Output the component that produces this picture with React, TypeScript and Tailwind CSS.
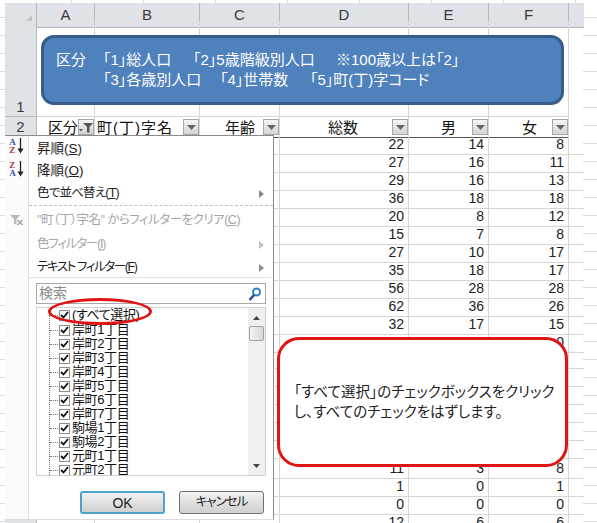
import React from 'react';

const rows: (number[] | null)[] = [
  [22, 14, 8], [27, 16, 11], [29, 16, 13], [36, 18, 18], [20, 8, 12], [15, 7, 8],
  [27, 10, 17], [35, 18, 17], [56, 28, 28], [62, 36, 26], [32, 17, 15], [0, 0, 0],
  null, null, null, null, null, null,
  [11, 3, 8], [1, 0, 1], [0, 0, 0], [12, 6, 6],
];

const towns = [
  '岸町1丁目', '岸町2丁目', '岸町3丁目', '岸町4丁目', '岸町5丁目', '岸町6丁目',
  '岸町7丁目', '駒場1丁目', '駒場2丁目', '元町1丁目', '元町2丁目',
];

const GRID = 'grid grid-cols-[32px_58px_105px_80px_129px_80px_80px_15px]';
const HEAD = 'flex bg-[#dfe2e7] border-r border-b border-[#b4b7bb] text-[#3a3a3a]';
const CELL = 'border-r border-b border-[#d6d6d6]';
const FILTER_CELL = 'flex items-center justify-end border-b border-r border-b-[#555] border-r-[#d6d6d6]';

const FilterBtn = ({ active = false }: { active?: boolean }) => (
  <span className="flex h-[16px] w-[16px] shrink-0 items-center justify-center border border-[#a8a8a8] bg-gradient-to-b from-[#f4f4f4] to-[#d4d4d4]">
    {active ? (
      <svg width="14" height="11" viewBox="0 0 14 11">
        <path d="M4 1h10L10.500 5v5.500H8V5z" fill="#555" />
        <path d="M0 7h4L2 9.500z" fill="#555" />
      </svg>
    ) : (
      <svg width="9" height="5" viewBox="0 0 9 5">
        <path d="M0 0h9L4.500 5z" fill="#666" />
      </svg>
    )}
  </span>
);

const SortIcon = ({ top, bottom, topColor, bottomColor, className = '' }: { top: string; bottom: string; topColor: string; bottomColor: string; className?: string }) => (
  <div className={`flex w-[23px] items-center justify-center gap-[1px] ${className}`}>
    <div className="flex flex-col font-['Liberation_Serif',serif] text-[9px] font-bold leading-[8px]">
      <span className={topColor}>{top}</span>
      <span className={bottomColor}>{bottom}</span>
    </div>
    <svg width="7" height="16" viewBox="0 0 7 16">
      <path d="M3.500 0v12" stroke="#222" strokeWidth="1.300" />
      <path d="M0.500 10.500h6L3.500 15.500z" fill="#222" />
    </svg>
  </div>
);

const MenuItem = ({ icon, disabled = false, arrow = false, children, className = '' }: { icon?: React.ReactNode; disabled?: boolean; arrow?: boolean; children: React.ReactNode; className?: string }) => (
  <div className={`flex items-center ${className}`}>
    <div className="flex w-[23px] shrink-0 justify-center">{icon}</div>
    <div className={`ml-[9px] flex-1 whitespace-nowrap ${disabled ? 'text-[#a6a6a6]' : 'text-[#222]'}`}>{children}</div>
    {arrow && (
      <svg className="mr-[9px]" width="5" height="8" viewBox="0 0 5 8">
        <path d="M0 0l5 4-5 4z" fill={disabled ? '#c4c4c4' : '#8a8a8a'} />
      </svg>
    )}
  </div>
);

const ListRow = ({ label, className = '' }: { label: string; className?: string }) => (
  <div className={`flex h-[14px] shrink-0 items-center ${className}`}>
    <span className="w-[8px] border-t border-dotted border-[#777]" />
    <span className="ml-[1px] flex h-[11px] w-[11px] shrink-0 items-center justify-center border border-[#8e8f8f] bg-white">
      <svg width="9" height="8" viewBox="0 0 9 8">
        <path d="M1 4l2.500 2.500L8 1" fill="none" stroke="#111" strokeWidth="1.800" />
      </svg>
    </span>
    <span className="ml-[2px] whitespace-nowrap text-[13px] leading-[14px] tracking-[-0.4px] text-[#111] [font-feature-settings:'palt']">{label}</span>
  </div>
);

export default function App() {
  return (
    <div className="relative h-[523px] w-[597px] overflow-hidden bg-white bg-[repeating-linear-gradient(to_bottom,transparent_0,transparent_17px,#dedede_17px,#dedede_18px),repeating-linear-gradient(to_right,transparent_0,transparent_71px,#dedede_71px,#dedede_72px)] pl-[5px] pt-[3px] font-['Liberation_Sans','Noto_Sans_CJK_JP',sans-serif]">
      <div className="w-[578px] bg-white">
        {/* column letters */}
        <div className={`${GRID} h-[18px] text-[15px]`}>
          <div className={`${HEAD} items-end justify-end pb-[2px] pr-[4px]`}>
            <svg width="10" height="10" viewBox="0 0 10 10">
              <path d="M10 0v10H0z" fill="#c2c5c9" />
            </svg>
          </div>
          {['A', 'B', 'C', 'D', 'E', 'F'].map(c => (
            <div key={c} className={`${HEAD} items-center justify-center pt-[1px]`}>{c}</div>
          ))}
          <div className="border-b border-[#b4b7bb] bg-[#dfe2e7]" />
        </div>

        {/* tall row 1 */}
        <div className={`${GRID} h-[96px]`}>
          <div className={`${HEAD} items-end justify-center text-[15px] leading-[18px]`}>1</div>
          {[0, 1, 2, 3, 4, 5].map(i => (
            <div key={i} className={CELL} />
          ))}
          <div />
        </div>

        {/* row 2, filter headers */}
        <div className={`${GRID} h-[18px] text-[15px] leading-[18px] text-[#111] [font-feature-settings:'palt']`}>
          <div className={`${HEAD} items-center justify-center`}>2</div>
          <div className={FILTER_CELL}>
            <span className="mt-[2px] whitespace-nowrap">区分</span>
            <FilterBtn active />
          </div>
          <div className={`${FILTER_CELL} !justify-between pl-[2px]`}>
            <span className="mt-[2px] whitespace-nowrap tracking-[1px]">町(丁)字名</span>
            <FilterBtn />
          </div>
          <div className={`${FILTER_CELL} gap-[8px]`}>
            <span className="mt-[2px]">年齢</span>
            <FilterBtn />
          </div>
          <div className={`${FILTER_CELL} gap-[34px]`}>
            <span className="mt-[2px]">総数</span>
            <FilterBtn />
          </div>
          <div className={`${FILTER_CELL} gap-[16px]`}>
            <span className="mt-[2px]">男</span>
            <FilterBtn />
          </div>
          <div className={`${FILTER_CELL} gap-[15px]`}>
            <span className="mt-[2px]">女</span>
            <FilterBtn />
          </div>
          <div />
        </div>

        {/* data */}
        {rows.map((row, i) => (
          <div key={i} className={`${GRID} h-[18px] text-[14px] leading-[19px] text-[#222]`}>
            <div className={HEAD} />
            <div className={CELL} />
            <div className={CELL} />
            <div className={CELL} />
            {[0, 1, 2].map(j => (
              <div key={j} className={`${CELL} pr-[4px] text-right`}>{row ? row[j] : ''}</div>
            ))}
            <div className="border-b border-[#d6d6d6]" />
          </div>
        ))}
      </div>

      {/* blue shape */}
      <div className="absolute left-[41px] top-[35px] flex h-[70px] w-[523px] items-center rounded-[13px] border-[3px] border-[#385d8a] bg-[#4f81bd] pl-[12px] text-[15px] leading-[20px] text-white [font-feature-settings:'palt']">
        <div className="w-[47px] self-center pb-[20px]">区分</div>
        <div className="flex flex-col whitespace-nowrap">
          <div className="flex">
            <span className="w-[90px]">「1」総人口</span>
            <span className="w-[143px]">「2」5歳階級別人口</span>
            <span>※100歳以上は「2」</span>
          </div>
          <div className="flex">
            <span className="w-[117px]">「3」各歳別人口</span>
            <span className="w-[90px]">「4」世帯数</span>
            <span>「5」町(丁)字コード</span>
          </div>
        </div>
      </div>

      {/* filter dropdown */}
      <div className="absolute left-[5px] top-[135px] flex h-[385px] w-[269px] flex-col border-b border-r border-t border-b-[#dcdcdc] border-r-[#8a8a8a] border-t-[#8a8a8a] bg-white text-[12.500px] [font-feature-settings:'palt']">
        <div className="absolute bottom-0 left-0 top-0 w-[24px] border-r border-[#e2e2e2] bg-[#fbfbfb]" />
        <div className="relative flex flex-col">
          <MenuItem className="mt-[1px] h-[22px] pt-[2px] text-[13.500px]" icon={<SortIcon className="mb-[7px]" top="A" bottom="Z" topColor="text-[#2a4fa8]" bottomColor="text-[#a03a3a]" />}>
            昇順(<span className="underline">S</span>)
          </MenuItem>
          <MenuItem className="h-[22px] pt-[2px] text-[13.500px]" icon={<SortIcon className="mb-[5px]" top="Z" bottom="A" topColor="text-[#a03a3a]" bottomColor="text-[#2a4fa8]" />}>
            降順(<span className="underline">O</span>)
          </MenuItem>
          <MenuItem className="h-[22px] pt-[3px] tracking-[-0.8px]" arrow>
            色で並べ替え(<span className="underline">T</span>)
          </MenuItem>
          <div className="ml-[24px] mt-[2px] border-t border-dashed border-[#c0c0c0]" />
          <MenuItem className="mt-[1px] h-[24px] pt-[2px] tracking-[-0.5px]" disabled icon={
            <svg width="14" height="11" viewBox="0 0 14 11">
              <path d="M0 0h10L6.500 4v6L4 8.500V4z" fill="#b8b8b8" />
              <path d="M7.500 5l5 5M12.500 5l-5 5" stroke="#a8a8a8" strokeWidth="1.500" />
            </svg>
          }>
            "町（丁）字名" からフィルターをクリア(<span className="underline">C</span>)
          </MenuItem>
          <MenuItem className="h-[23px] pt-[4px] tracking-[-1.2px]" disabled arrow>
            色フィルター(<span className="underline">I</span>)
          </MenuItem>
          <MenuItem className="h-[23px] pt-[4px] tracking-[-1.4px]" arrow>
            テキスト フィルター(<span className="underline">F</span>)
          </MenuItem>
          <div className="ml-[24px] mr-[2px] border-t border-[#e2e2e2]" />

          {/* search */}
          <div className="ml-[31px] mt-[5px] flex h-[21px] w-[230px] items-center justify-between border border-[#a9a9a9] bg-white pl-[2px] pr-[3px] text-[14px] text-[#8a8a8a]">
            <span>検索</span>
            <svg width="14" height="14" viewBox="0 0 14 14">
              <circle cx="8.500" cy="5" r="3.500" fill="none" stroke="#2f7fc1" strokeWidth="2" />
              <path d="M6 8l-4.500 5" stroke="#1b4f91" strokeWidth="2.500" />
            </svg>
          </div>

          {/* check list */}
          <div className="ml-[31px] mt-[3px] flex h-[169px] w-[230px] overflow-hidden border border-[#d0d0d0] bg-white">
            <div className="relative flex-1 overflow-hidden pl-[13px]">
              <div className="absolute bottom-0 left-[12px] top-[7px] border-l border-dotted border-[#777]" />
              <div className="flex flex-col">
                <ListRow label="(すべて選択)" />
                {towns.map((t, i) => (
                  <ListRow key={t} label={t} className={i === 0 ? 'mt-[1px]' : ''} />
                ))}
              </div>
            </div>
            <div className="flex w-[17px] shrink-0 flex-col items-center bg-[#f0f0f0]">
              <svg className="mt-[8px]" width="7" height="4" viewBox="0 0 7 4">
                <path d="M0 4h7L3.500 0z" fill="#444" />
              </svg>
              <div className="mt-[6px] h-[15px] w-[15px] rounded-[2px] border border-[#a0a0a0] bg-gradient-to-r from-[#f4f4f4] to-[#d8d8d8]" />
              <div className="flex-1" />
              <svg className="mb-[7px]" width="7" height="4" viewBox="0 0 7 4">
                <path d="M0 0h7L3.500 4z" fill="#444" />
              </svg>
            </div>
          </div>

          {/* buttons */}
          <div className="ml-[75px] mt-[15px] flex gap-[14px]">
            <button className="h-[23px] w-[85px] rounded-[3px] border-2 border-[#4ba3c7] bg-gradient-to-b from-[#f2f2f2] to-[#cfcfcf] text-[14px] text-[#222]">OK</button>
            <button className="h-[23px] w-[85px] rounded-[3px] border border-[#707070] bg-gradient-to-b from-[#f2f2f2] to-[#cfcfcf] text-[12.500px] tracking-[-1px] text-[#222]">キャンセル</button>
          </div>
        </div>
      </div>

      {/* red highlight round the select-all row */}
      <div className="absolute left-[48px] top-[298px] h-[27px] w-[104px] rounded-[50%] border-[3px] border-[#e01414]" />

      {/* red callout */}
      <div className="absolute left-[277px] top-[337px] flex h-[130px] w-[291px] flex-col justify-center rounded-[22px] border-[3px] border-[#e01414] bg-white pl-[14px] text-[14.500px] leading-[20px] text-[#222] [font-feature-settings:'palt']">
        <div className="whitespace-nowrap">「すべて選択」のチェックボックスをクリック</div>
        <div className="whitespace-nowrap">し、すべてのチェックをはずします。</div>
      </div>
    </div>
  );
}
